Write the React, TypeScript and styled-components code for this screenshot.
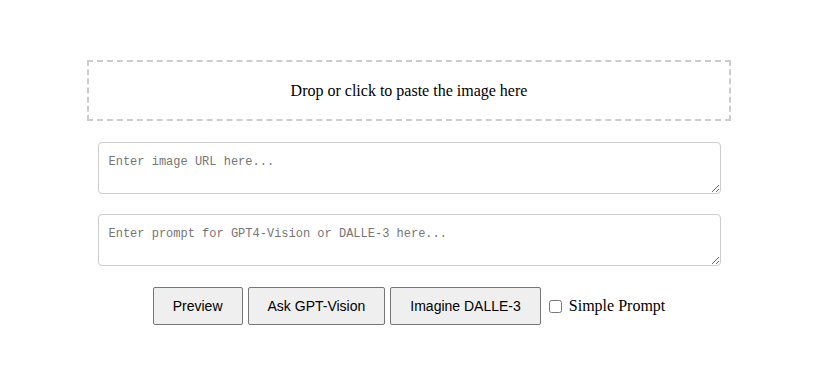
import styled, { createGlobalStyle } from 'styled-components'

const GlobalStyle = createGlobalStyle`
  body {
    margin: 0;
    background: #fff;
    font-family: "Liberation Serif", "Times New Roman", serif;
  }
`

const Page = styled.div`
  display: flex;
  flex-direction: column;
  align-items: center;
  padding: 60px 3px 0 0;
`

const DropZone = styled.div`
  box-sizing: border-box;
  width: 644px;
  height: 61px;
  border: 2px dashed #ccc;
  display: flex;
  align-items: center;
  justify-content: center;
  font-size: 16px;
  color: #000;
  cursor: pointer;
`

const Field = styled.textarea<{ $gap: number }>`
  box-sizing: border-box;
  width: 623px;
  height: 52px;
  margin-top: ${(p) => p.$gap}px;
  padding: 12px 10px 8px;
  border: 1px solid #ccc;
  border-radius: 4px;
  font-family: "Liberation Mono", "DejaVu Sans Mono", monospace;
  font-size: 12px;
  line-height: 15px;
  &::placeholder {
    color: #757575;
  }
`

const Actions = styled.div`
  display: flex;
  align-items: center;
  margin-top: 21px;
`

const Button = styled.button`
  box-sizing: border-box;
  height: 38px;
  padding: 0 19px;
  margin-right: 5px;
  background: #efefef;
  border: 1px solid #767676;
  border-radius: 2px;
  font-family: "Liberation Sans", Arial, sans-serif;
  font-size: 14px;
  color: #000;
  cursor: pointer;
`

const Toggle = styled.label`
  display: flex;
  align-items: center;
  font-size: 16px;
  color: #000;
  margin-left: 3px;
  input {
    width: 13px;
    height: 13px;
    margin: 0 7px 0 0;
  }
`

export default function App() {
  return (
    <>
      <GlobalStyle />
      <Page>
        <DropZone>Drop or click to paste the image here</DropZone>
        <Field $gap={21} placeholder="Enter image URL here..." />
        <Field $gap={20} placeholder="Enter prompt for GPT4-Vision or DALLE-3 here..." />
        <Actions>
          <Button>Preview</Button>
          <Button>Ask GPT-Vision</Button>
          <Button>Imagine DALLE-3</Button>
          <Toggle>
            <input type="checkbox" />
            Simple Prompt
          </Toggle>
        </Actions>
      </Page>
    </>
  )
}
